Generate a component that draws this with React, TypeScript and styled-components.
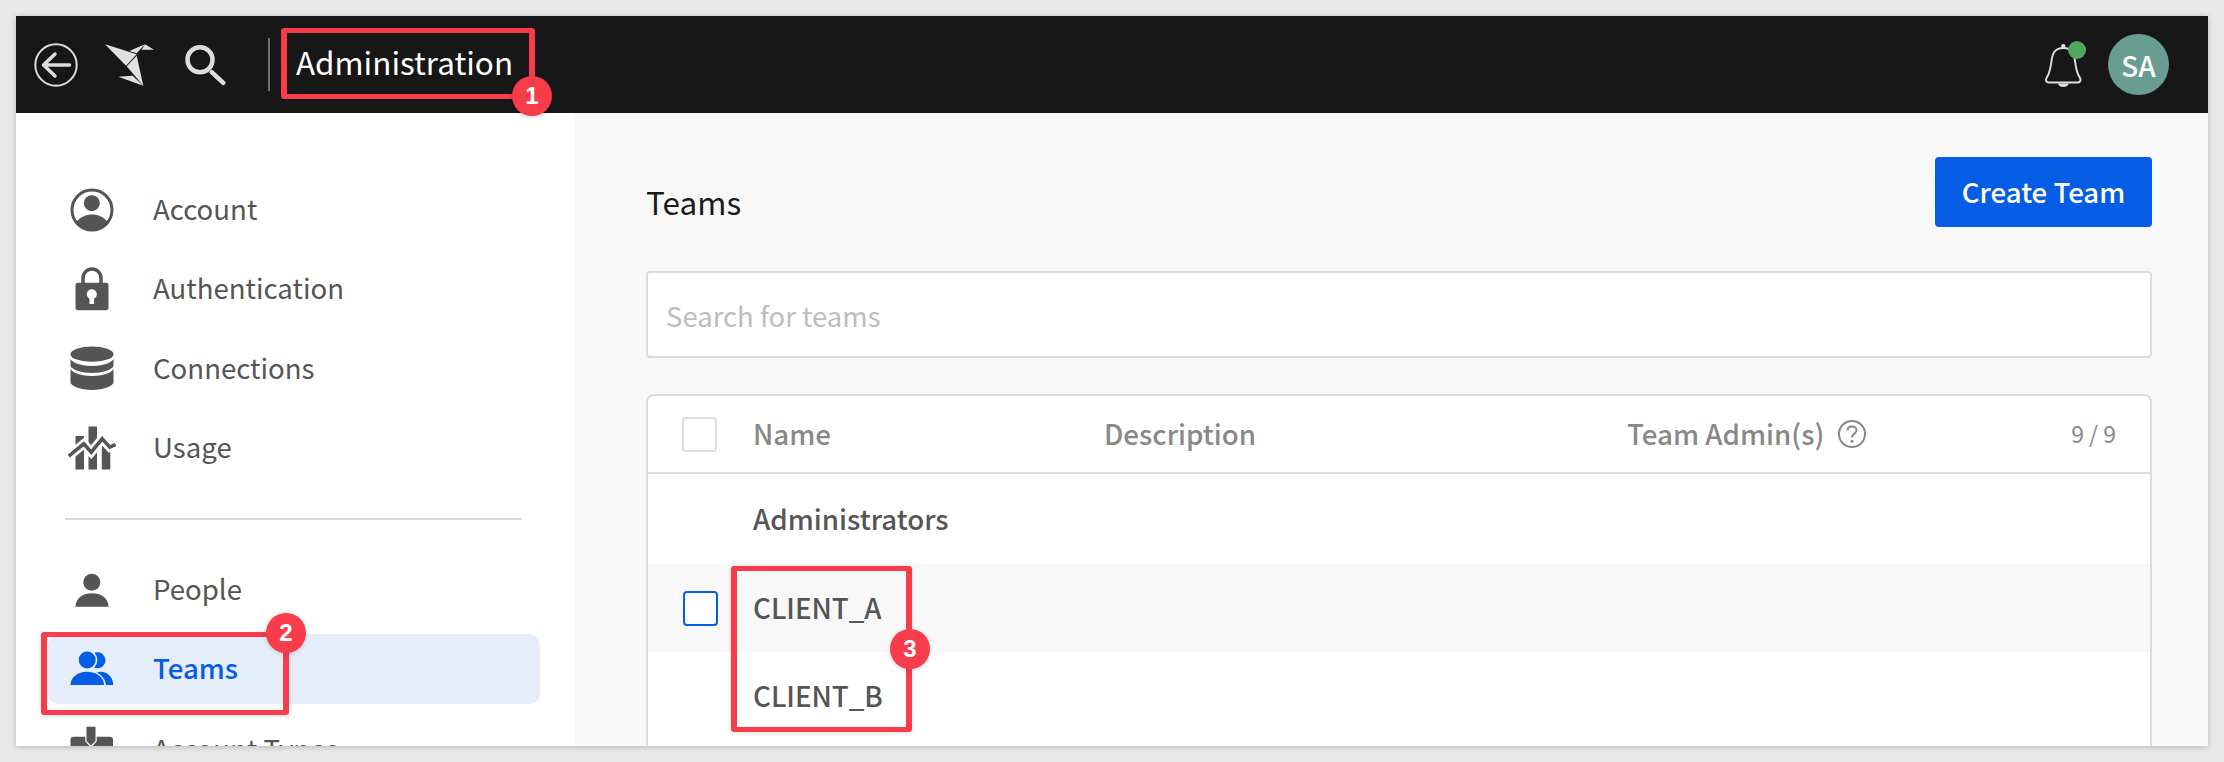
import React from "react";
import styled, { createGlobalStyle } from "styled-components";

const FONT = `"Noto Sans CJK SC", "Noto Sans", sans-serif`;

const Global = createGlobalStyle`
  * { box-sizing: border-box; }
  html, body { margin: 0; padding: 0; background: #e9e9e9; }
  body { font-family: ${FONT}; }
`;

const Page = styled.div`
  width: 2224px;
  height: 762px;
  padding: 16px;
  overflow: hidden;
`;
const Window = styled.div`
  position: relative;
  width: 2192px;
  height: 730px;
  display: flex;
  flex-direction: column;
  overflow: hidden;
  background: #f8f8f8;
  box-shadow: 0 1px 6px rgba(0, 0, 0, 0.22);
`;
const Header = styled.header`
  height: 97px;
  flex: none;
  background: #171717;
  display: flex;
  align-items: center;
  padding: 0 39px 0 18px;
`;
const HeaderIcon = styled.svg<{ $gap: number }>`
  flex: none;
  display: block;
  margin-left: ${(p) => p.$gap}px;
`;
const HeaderRule = styled.div`
  width: 2px;
  height: 53px;
  background: #6f6f6f;
  margin-left: 40px;
`;
const Title = styled.div`
  margin-left: 26px;
  padding-bottom: 5px;
  color: #fff;
  font-size: 31.4px;
  line-height: 40px;
`;
const HeaderRight = styled.div`
  margin-left: auto;
  display: flex;
  align-items: center;
  gap: 23px;
`;
const BellWrap = styled.div`
  position: relative;
  width: 44px;
  height: 48px;
`;
const BellDot = styled.span`
  position: absolute;
  left: 27px;
  top: 0;
  width: 18px;
  height: 18px;
  border-radius: 50%;
  background: #4ea860;
`;
const Avatar = styled.div`
  width: 61px;
  height: 61px;
  border-radius: 50%;
  background: #6a9d92;
  color: #fff;
  font-size: 28px;
  font-weight: 500;
  display: flex;
  align-items: center;
  justify-content: center;
`;
const Body = styled.div`
  flex: 1;
  min-height: 0;
  display: flex;
`;
const Sidebar = styled.nav`
  width: 559px;
  flex: none;
  background: #fff;
  padding: 57px 35px 0 32px;
  overflow: hidden;
`;
const NavItem = styled.div<{ $active?: boolean }>`
  height: ${(p) => (p.$active ? 70 : 79.3)}px;
  margin: ${(p) => (p.$active ? "4.4px 0 6px" : "0")};
  display: flex;
  align-items: center;
  gap: 37px;
  padding-left: 20px;
  border-radius: 10px;
  background: ${(p) => (p.$active ? "#e5edfa" : "transparent")};
  color: ${(p) => (p.$active ? "#055ce5" : "#555")};
  font-size: 27.6px;
  line-height: 36px;
  font-weight: ${(p) => (p.$active ? 500 : 400)};
`;
const NavLabel = styled.span`
  padding-bottom: 3px;
`;
const NavIcon = styled.svg`
  width: 48px;
  height: 48px;
  flex: none;
  display: block;
`;
const NavRule = styled.hr`
  height: 2px;
  border: 0;
  background: #d9d9d9;
  margin: 31px 18px 30px 17px;
`;
const Main = styled.main`
  flex: 1;
  min-width: 0;
  display: flex;
  flex-direction: column;
  padding: 44px 56px 0 71px;
`;
const TopRow = styled.div`
  display: flex;
  align-items: center;
  justify-content: space-between;
  height: 70px;
`;
const PageTitle = styled.h1`
  margin: 17px 0 0;
  font-size: 31.5px;
  line-height: 40px;
  font-weight: 400;
  color: #1a1a1a;
`;
const CreateButton = styled.button`
  width: 217px;
  height: 70px;
  border: 0;
  border-radius: 4px;
  background: #055ce5;
  color: #fff;
  font-family: ${FONT};
  font-size: 27.6px;
  font-weight: 500;
  padding: 0 0 3px;
`;
const SearchBox = styled.div`
  height: 87px;
  margin-top: 44px;
  background: #fff;
  border: 2px solid #dcdcdc;
  border-radius: 4px;
  display: flex;
  align-items: center;
  padding-left: 18px;
  color: #bdbdbd;
  font-size: 27.5px;
`;
const Table = styled.section`
  flex: 1;
  margin-top: 36px;
  background: #fff;
  border: 2px solid #dcdcdc;
  border-bottom: 0;
  border-radius: 8px 8px 0 0;
  overflow: hidden;
`;
const HeadRow = styled.div`
  height: 78px;
  display: grid;
  grid-template-columns: 71px 351px 523px 1fr auto;
  align-items: center;
  padding: 0 34px 0 34px;
  border-bottom: 2px solid #dcdcdc;
  color: #888;
  font-size: 27.7px;
  font-weight: 500;
`;
const HeadCell = styled.div`
  display: flex;
  align-items: center;
  gap: 13px;
  line-height: 36px;
`;
const HeadLabel = styled.span`
  padding-bottom: 2px;
`;
const Count = styled.div`
  font-size: 23px;
  font-weight: 400;
  color: #888;
  padding-bottom: 2px;
`;
const Row = styled.div<{ $hover?: boolean; $tall?: boolean }>`
  height: ${(p) => (p.$tall ? 90 : 88)}px;
  display: grid;
  grid-template-columns: 70px 1fr;
  align-items: center;
  padding-left: 35px;
  background: ${(p) => (p.$hover ? "#f8f8f8" : "#fff")};
  color: #555;
  font-size: 27.7px;
  font-weight: 500;
`;
const RowLabel = styled.span`
  padding-bottom: 2px;
`;
const Check = styled.span<{ $blue?: boolean }>`
  display: block;
  width: 35px;
  height: 35px;
  background: #fff;
  border-radius: 4px;
  border: 2px solid ${(p) => (p.$blue ? "#055ce5" : "#dcdcdc")};
`;
const Frame = styled.div<{ $l: number; $t: number; $w: number; $h: number }>`
  position: absolute;
  left: ${(p) => p.$l}px;
  top: ${(p) => p.$t}px;
  width: ${(p) => p.$w}px;
  height: ${(p) => p.$h}px;
  border-style: solid;
  border-color: #f93c4a;
  border-width: 5px 6px;
  border-radius: 3px;
  box-shadow: 0 1px 4px rgba(0, 0, 0, 0.15);
`;
const Badge = styled.div<{ $l: number; $t: number }>`
  position: absolute;
  left: ${(p) => p.$l}px;
  top: ${(p) => p.$t}px;
  width: 40px;
  height: 40px;
  border-radius: 50%;
  background: #f93c4a;
  color: #fff;
  font-family: "Liberation Sans", sans-serif;
  font-weight: 700;
  font-size: 24px;
  display: flex;
  align-items: center;
  justify-content: center;
  box-shadow: 0 1px 4px rgba(0, 0, 0, 0.18);
`;

const DARK = "#555";
const BLUE = "#055ce5";
const HALO = "#e5edfa";

const AccountIcon = () => (
  <NavIcon viewBox="0 0 48 48">
    <circle cx="24" cy="24" r="20" fill="none" stroke={DARK} strokeWidth="3" />
    <circle cx="23.8" cy="17.2" r="8" fill={DARK} />
    <path d="M8 36.5C12 31 18 28.5 24 28.5S36 31 40 36.5A20 20 0 0 1 8 36.5Z" fill={DARK} />
  </NavIcon>
);
const LockIcon = () => (
  <NavIcon viewBox="0 0 48 48">
    <path d="M15 18V13a9 9 0 0 1 18 0v5" fill="none" stroke={DARK} strokeWidth="3.5" />
    <rect x="7.5" y="17.7" width="33" height="27.6" rx="2.5" fill={DARK} />
    <circle cx="23.8" cy="29.3" r="5" fill="#fff" />
    <rect x="21.5" y="30" width="4.6" height="9" fill="#fff" />
  </NavIcon>
);
const DbIcon = () => (
  <NavIcon viewBox="0 0 48 48">
    <ellipse cx="24" cy="10.2" rx="21.5" ry="7.6" fill={DARK} />
    <path d="M2.5 15c2 4 11 7 21.5 7s19.5-3 21.5-7v7c-2 4-11 7-21.5 7S4.5 26 2.5 22Z" fill={DARK} />
    <path d="M2.5 25c2 4 11 7 21.5 7s19.5-3 21.5-7v13c0 4-10 8-21.5 8S2.5 42 2.5 38Z" fill={DARK} />
  </NavIcon>
);
const UsageIcon = () => (
  <NavIcon viewBox="0 0 48 48">
    <rect x="7.5" y="12" width="8.5" height="33.5" fill={DARK} />
    <rect x="20.5" y="2.5" width="8.5" height="43" fill={DARK} />
    <rect x="33.8" y="22" width="8.5" height="23.5" fill={DARK} />
    <polyline points="0.8,32.2 15.8,19.8 23.2,28.2 34.2,14.8 41.8,23.2 47.5,20.5" fill="none" stroke="#fff" strokeWidth="9" />
    <polyline points="0.8,32.2 15.8,19.8 23.2,28.2 34.2,14.8 41.8,23.2 47.5,20.5" fill="none" stroke={DARK} strokeWidth="3.5" />
  </NavIcon>
);
const PersonIcon = () => (
  <NavIcon viewBox="0 0 48 48">
    <circle cx="23.8" cy="16.3" r="8.5" fill={DARK} />
    <path d="M7.5 40.7C7.5 32 15 27.3 24 27.3S40.5 32 40.5 40.7Z" fill={DARK} />
  </NavIcon>
);
const TeamsIcon = () => (
  <NavIcon viewBox="0 0 48 48">
    <circle cx="29.5" cy="15.3" r="8" fill={BLUE} />
    <path d="M20 40C20 32 27 26.7 33 26.7S45.2 32 45.2 40Z" fill={BLUE} />
    <circle cx="19.2" cy="15" r="10.2" fill={HALO} />
    <circle cx="19.2" cy="15" r="8.5" fill={BLUE} />
    <path d="M38 40C37 32 30 25.5 19 25.5L26 40Z" fill={HALO} />
    <path d="M2.5 40C2.5 32 10 26.7 19 26.7S36 32 36 40Z" fill={BLUE} />
  </NavIcon>
);
const AccountTypesIcon = () => (
  <NavIcon viewBox="0 0 48 48">
    <rect x="2.5" y="10.7" width="42.5" height="32" rx="3" fill={DARK} />
    <path d="M15.5 9H18V15L23 20.5L28 15V9H31" fill="#fff" stroke="#fff" strokeWidth="1.5" />
    <path d="M18.5 0.7H27.5V15L23 19.5L18.5 15Z" fill={DARK} />
  </NavIcon>
);

const nav1: [string, React.ReactNode][] = [
  ["Account", <AccountIcon />],
  ["Authentication", <LockIcon />],
  ["Connections", <DbIcon />],
  ["Usage", <UsageIcon />],
];

export default function App() {
  return (
    <Page>
      <Global />
      <Window>
        <Header>
          <HeaderIcon $gap={0} width="44" height="44" viewBox="0 0 44 44">
            <circle cx="22" cy="22" r="20.7" fill="none" stroke="#ddd" strokeWidth="2" />
            <path d="M35.5 22H10M21 11L9.5 22L21 33" fill="none" stroke="#ddd" strokeWidth="3.5" strokeLinecap="round" strokeLinejoin="round" />
          </HeaderIcon>
          <HeaderIcon $gap={26} width="51" height="44" viewBox="0 0 51 44">
            <path d="M1 1.3L32.7 11.3L22 22.7Z" fill="#e0e0e0" />
            <path d="M25.3 8L41 1.3L32.7 10.3Z" fill="#e0e0e0" />
            <path d="M41 1.3L50 6.7L37.7 6.7Z" fill="#e0e0e0" />
            <path d="M22.7 23.3L32.7 12.7L39.3 42.7Z" fill="#e0e0e0" />
            <path d="M14.3 33.7L28.7 32.7L39.3 42.7Z" fill="#e0e0e0" />
          </HeaderIcon>
          <HeaderIcon $gap={29} width="44" height="44" viewBox="0 0 44 44">
            <circle cx="16" cy="16.8" r="12.5" fill="none" stroke="#ddd" strokeWidth="4.5" />
            <path d="M27.7 29.2L39.3 39.8" fill="none" stroke="#ddd" strokeWidth="4.5" strokeLinecap="round" />
          </HeaderIcon>
          <HeaderRule />
          <Title>Administration</Title>
          <HeaderRight>
            <BellWrap>
              <svg width="44" height="48" viewBox="0 0 44 48">
                <rect x="20.3" y="3" width="4" height="5" rx="1.5" fill="#ddd" />
                <path d="M22.3 7C14 7 11.5 12 10.5 20C9.5 28 8 33 6 36C4 39 5 41.5 8 41.5H36.5C39.5 41.5 40.5 39 38.5 36C36.5 33 35 28 34 20C33 12 30.5 7 22.3 7Z" fill="none" stroke="#ddd" strokeWidth="2" />
                <path d="M17 42.5H27.6A5.3 3.5 0 0 1 17 42.5Z" fill="#ddd" />
              </svg>
              <BellDot />
            </BellWrap>
            <Avatar>SA</Avatar>
          </HeaderRight>
        </Header>
        <Body>
          <Sidebar>
            {nav1.map(([label, icon]) => (
              <NavItem key={label}>
                {icon}
                <NavLabel>{label}</NavLabel>
              </NavItem>
            ))}
            <NavRule />
            <NavItem>
              <PersonIcon />
              <NavLabel>People</NavLabel>
            </NavItem>
            <NavItem $active>
              <TeamsIcon />
              <NavLabel>Teams</NavLabel>
            </NavItem>
            <NavItem>
              <AccountTypesIcon />
              <NavLabel>Account Types</NavLabel>
            </NavItem>
          </Sidebar>
          <Main>
            <TopRow>
              <PageTitle>Teams</PageTitle>
              <CreateButton>Create Team</CreateButton>
            </TopRow>
            <SearchBox>Search for teams</SearchBox>
            <Table>
              <HeadRow>
                <Check />
                <HeadCell><HeadLabel>Name</HeadLabel></HeadCell>
                <HeadCell><HeadLabel>Description</HeadLabel></HeadCell>
                <HeadCell>
                  <HeadLabel>Team Admin(s)</HeadLabel>
                  <svg width="30" height="30" viewBox="0 0 30 30">
                    <circle cx="15" cy="15" r="13" fill="none" stroke="#888" strokeWidth="2" />
                    <path d="M10.5 11.5C10.5 9 12.5 7.5 15 7.5S19.5 9 19.5 11.3C19.5 14.5 15 14.8 15 18.5" fill="none" stroke="#888" strokeWidth="2" />
                    <circle cx="15" cy="22.3" r="1.5" fill="#888" />
                  </svg>
                </HeadCell>
                <Count>9 / 9</Count>
              </HeadRow>
              <Row $tall>
                <span />
                <RowLabel>Administrators</RowLabel>
              </Row>
              <Row $hover>
                <Check $blue />
                <RowLabel>CLIENT_A</RowLabel>
              </Row>
              <Row>
                <span />
                <RowLabel>CLIENT_B</RowLabel>
              </Row>
            </Table>
          </Main>
        </Body>
        <Frame $l={265} $t={12} $w={254} $h={71} />
        <Badge $l={496} $t={60}>1</Badge>
        <Frame $l={25} $t={616} $w={248} $h={83} />
        <Badge $l={250} $t={597}>2</Badge>
        <Frame $l={715} $t={550} $w={181} $h={166} />
        <Badge $l={874} $t={613}>3</Badge>
      </Window>
    </Page>
  );
}
